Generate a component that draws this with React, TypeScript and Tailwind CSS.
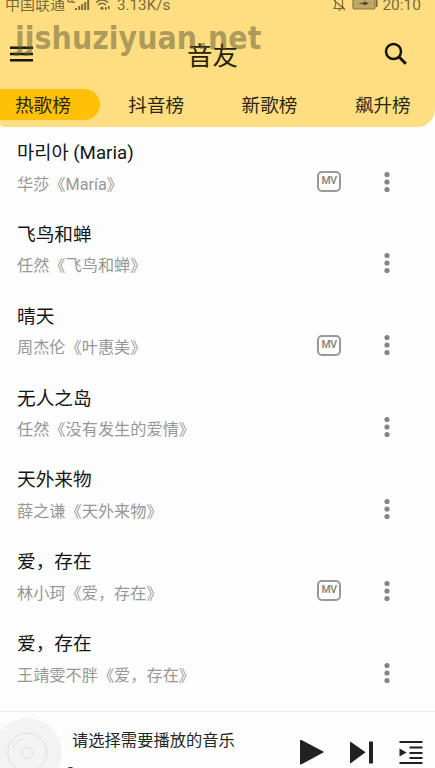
const songs = [
  { title: '마리아 (Maria)', artist: '华莎《María》', mv: true },
  { title: '飞鸟和蝉', artist: '任然《飞鸟和蝉》', mv: false },
  { title: '晴天', artist: '周杰伦《叶惠美》', mv: true },
  { title: '无人之岛', artist: '任然《没有发生的爱情》', mv: false },
  { title: '天外来物', artist: '薛之谦《天外来物》', mv: false },
  { title: '爱，存在', artist: '林小珂《爱，存在》', mv: true },
  { title: '爱，存在', artist: '王靖雯不胖《爱，存在》', mv: false },
];

const tabs = ['热歌榜', '抖音榜', '新歌榜', '飙升榜'];

function StatusBar() {
  return (
    <div className="flex h-[14px] items-start justify-between overflow-hidden pl-[5px] pr-[14px] text-[#7b6b3b]">
      <div className="flex items-start">
        <span className="-mt-[6px] text-[15px] leading-[22px]">中国联通</span>
        <svg className="ml-[2px]" width="44" height="12" viewBox="0 0 44 12" fill="currentColor">
          <path d="M1 0v1.500h2V3M5 0v2.500h2V1" fill="none" stroke="currentColor" strokeWidth="1.2" />
          <path d="M8 8h2v2H8zM11.2 6h2v4h-2zM14.2 4h2v6h-2zM17.2 2h2v8h-2zM20.2 0h2v10h-2z" />
          <path d="M29 2.500q6-5 12 0M31 5q4-3.500 8 0" fill="none" stroke="currentColor" strokeWidth="1.5" />
          <circle cx="35" cy="8.2" r="1.6" />
          <path d="M38 7h1.600v3H38zM41 6h1.600v3H41z" />
        </svg>
        <span className="-mt-[6px] ml-[6px] text-[15.200px] leading-[22px]">3.13K/s</span>
      </div>
      <div className="flex items-start">
        <svg width="13" height="12" viewBox="0 0 13 12" fill="none" stroke="currentColor" strokeWidth="1.2">
          <path d="M2.500 0v6L1 8.500h10L9.500 6V0M1 0l11 10M5 10h3" />
        </svg>
        <svg className="ml-[6px]" width="26" height="12" viewBox="0 0 26 12">
          <path d="M1 -3v10q0 2 2 2h18q2 0 2-2v-10" fill="#bda865" stroke="#8c7a43" strokeWidth="1.2" />
          <path d="M6 3.500l6-1V1l5 2.500-5 2V4.500z" fill="#55491f" />
          <path d="M24.800 0v7" stroke="#7b6b3b" strokeWidth="1.600" />
        </svg>
        <span className="-mt-[6px] ml-[4px] text-[15.500px] leading-[22px]">20:10</span>
      </div>
    </div>
  );
}

function Header() {
  return (
    <header className="relative h-[127px] shrink-0 overflow-hidden rounded-br-[18px] rounded-bl-[4px] bg-[#ffde82]">
      <StatusBar />
      <div className="flex h-[75px] items-center justify-between pl-[10px] pr-[27px] pt-[8px]">
        <svg className="-mt-[4px]" width="23" height="18" viewBox="0 0 23 18" fill="#17150d">
          <path d="M0 1.500h23v2.400H0zM0 7.800h23v2.400H0zM0 14.100h23v2.400H0z" />
        </svg>
        <h1 className="ml-[8px] text-[25.500px] font-normal leading-[34px] text-[#26210f]">音友</h1>
        <svg className="-mt-[3px]" width="24" height="24" viewBox="0 0 24 24" fill="none" stroke="#14120a" strokeWidth="2.500">
          <circle cx="9.500" cy="9.500" r="7.500" />
          <path d="M14.800 14.800l7 7" strokeWidth="3" />
        </svg>
      </div>
      <nav className="flex h-[32px] text-[18.600px] text-[#2c2611]">
        {tabs.map((tab, index) => (
          <div key={tab} className="w-[113.300px] shrink-0">
            <div className={index === 0 ? 'h-[31px] w-[99.500px] rounded-r-full bg-[#ffc107] pl-[15px] leading-[34px]' : 'pl-[15px] leading-[34px]'}>{tab}</div>
          </div>
        ))}
      </nav>
      <span className="absolute left-[15px] top-[18px] origin-left scale-x-[0.892] whitespace-nowrap font-['DejaVu_Sans'] text-[32px] font-bold leading-[40px] text-[#5d5633]/50">
        jjshuziyuan.net
      </span>
    </header>
  );
}

function MvIcon() {
  return (
    <span className="mr-[42px] flex h-[21px] w-[24px] items-center justify-center rounded-[5px] border-2 border-[#999999] text-[10.500px] font-medium leading-none tracking-[-0.500px] text-[#808080]">
      MV
    </span>
  );
}

export default function App() {
  return (
    <div className="flex h-[768px] w-[435px] flex-col overflow-hidden bg-[#fdfdfd] font-[Roboto,'Noto_Sans_CJK_SC',sans-serif]">
      <Header />
      <main className="h-[584px] shrink-0 overflow-hidden">
        {songs.map((song, index) => (
          <div key={index} className="flex h-[81.850px] justify-between pl-[17px] pr-[44px]">
            <div className="pt-[12px]">
              <div className="text-[18.700px] leading-[28px] text-[#151515]">{song.title}</div>
              <div className="mt-[4.500px] text-[16.200px] leading-[26px] text-[#989898]">{song.artist}</div>
            </div>
            <div className="mt-[44px] flex h-[21px] items-center">
              {song.mv && <MvIcon />}
              <svg width="8" height="22" viewBox="0 0 8 22" fill="#858585">
                <circle cx="4" cy="3.500" r="2.600" />
                <circle cx="4" cy="11" r="2.600" />
                <circle cx="4" cy="18.500" r="2.600" />
              </svg>
            </div>
          </div>
        ))}
      </main>
      <footer className="flex h-[57px] shrink-0 border-t border-[#ededed] bg-[#fdfdfd]">
        <svg width="64" height="56" viewBox="0 0 64 56" fill="none" stroke="#dedede">
          <circle cx="27" cy="41" r="35" fill="#f3f3f3" stroke="none" />
          <circle cx="27.300" cy="40.500" r="19.500" />
          <circle cx="27.300" cy="41" r="5.300" />
          <path d="M13 37q2-8 9-10" />
        </svg>
        <div className="ml-[8px] w-[228px] pt-[16px] text-[16.300px] leading-[26px] text-[#262626]">
          请选择需要播放的音乐
          <div className="-ml-[6px] mt-[13px] size-[9px] rounded-full bg-[#202020]" />
        </div>
        <svg className="mt-[26px]" width="126" height="30" viewBox="0 0 126 30" fill="#212121">
          <path d="M0 3q0-1.500 1.500-.9L23.300 13.500q.8.500 0 1L1.500 26.300Q0 27 0 25.500z" />
          <path d="M50 4.500q0-1 1-.4L65.500 14.200 51 25q-1 .6-1-.4zM69 3.500h4v22h-4z" />
          <path d="M99.500 3h23v2h-23zM109.500 8.500h13v2h-13zM109.500 14h13v2h-13zM109.500 19h13v2h-13zM99.500 24h23v2h-23zM99.500 10.500l7 4-7 4z" />
        </svg>
      </footer>
    </div>
  );
}
